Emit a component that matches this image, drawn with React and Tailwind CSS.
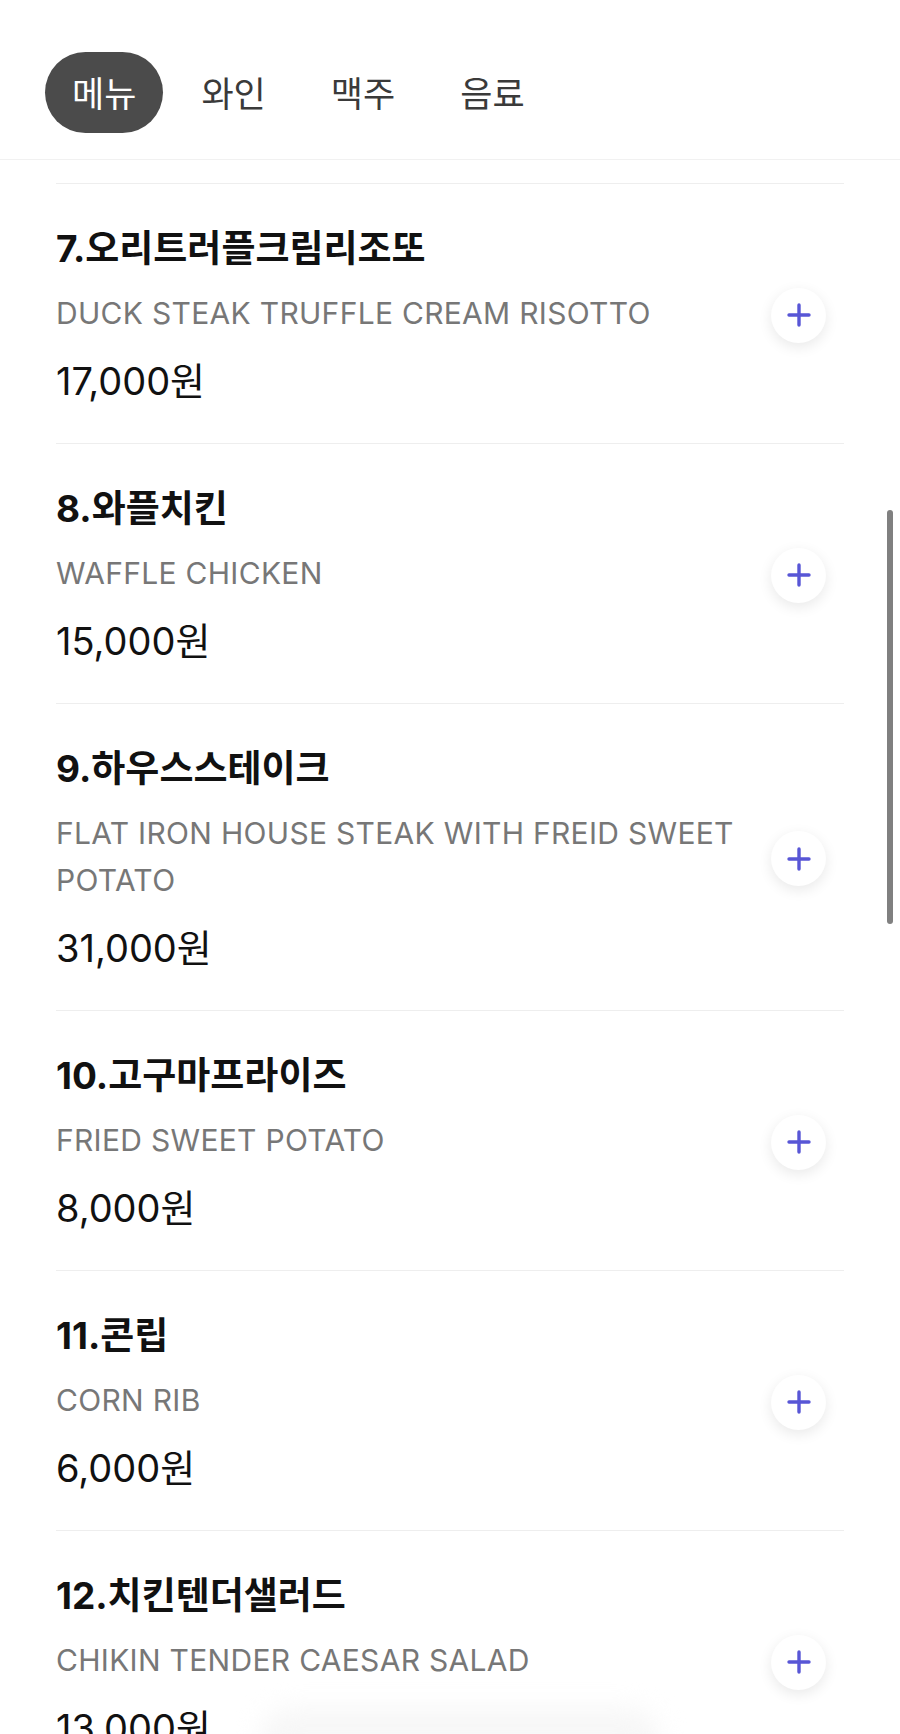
import React from "react";

const tabs = ["메뉴", "와인", "맥주", "음료"];

const items = [
  { name: "7.오리트러플크림리조또", en: "DUCK STEAK TRUFFLE CREAM RISOTTO", price: "17,000원" },
  { name: "8.와플치킨", en: "WAFFLE CHICKEN", price: "15,000원" },
  { name: "9.하우스스테이크", en: "FLAT IRON HOUSE STEAK WITH FREID SWEET POTATO", price: "31,000원" },
  { name: "10.고구마프라이즈", en: "FRIED SWEET POTATO", price: "8,000원" },
  { name: "11.콘립", en: "CORN RIB", price: "6,000원" },
  { name: "12.치킨텐더샐러드", en: "CHIKIN TENDER CAESAR SALAD", price: "13,000원" },
];

function PlusButton() {
  return (
    <button className="w-[55px] h-[55px] shrink-0 rounded-full bg-white shadow-[0_4px_14px_rgba(0,0,0,0.09)] flex items-center justify-center mr-[18px]">
      <svg width="24" height="24" viewBox="0 0 24 24" fill="none">
        <path d="M12 2v20M2 12h20" stroke="#5856d6" strokeWidth="3.4" strokeLinecap="round" />
      </svg>
    </button>
  );
}

export default function App() {
  return (
    <div className="relative h-[1734px] overflow-hidden bg-white font-['Inter','Noto_Sans_CJK_KR',sans-serif]">
      <header className="border-b border-[#f1f1f1] pl-[45px] pt-[52px] pb-[26px]">
        <nav className="flex gap-[11px]">
          {tabs.map((t, i) => (
            <button
              key={t}
              className={[
                "h-[81px] px-[27px] rounded-full text-[35px] leading-none pt-[3px]",
                i === 0 ? "bg-[#4b4b4b] text-white" : "text-[#3a3a3a]",
              ].join(" ")}
            >
              {t}
            </button>
          ))}
        </nav>
      </header>

      <div className="mx-[56px]">
        <div className="h-[24px] border-b border-[#eeeeee]" />
        {items.map((it) => (
          <div key={it.name} className="flex items-center gap-5 border-b border-[#eeeeee] pt-[41px] pb-[38px]">
            <div className="flex-1 min-w-0">
              <div className="text-[37px] leading-[48px] font-bold text-[#111111]">{it.name}</div>
              <div className="mt-[17px] text-[30px] leading-[47px] text-[#777777] tracking-[0.01em]">{it.en}</div>
              <div className="mt-[20px] text-[38px] leading-[48px] text-[#111111]">{it.price}</div>
            </div>
            <PlusButton />
          </div>
        ))}
      </div>

      <div className="absolute left-[887px] top-[510px] w-[6px] h-[414px] rounded-full bg-[#808080]" />
      <div className="absolute left-[260px] top-[1708px] w-[400px] h-[60px] rounded-full bg-[#f7f7f7] blur-md" />
    </div>
  );
}
